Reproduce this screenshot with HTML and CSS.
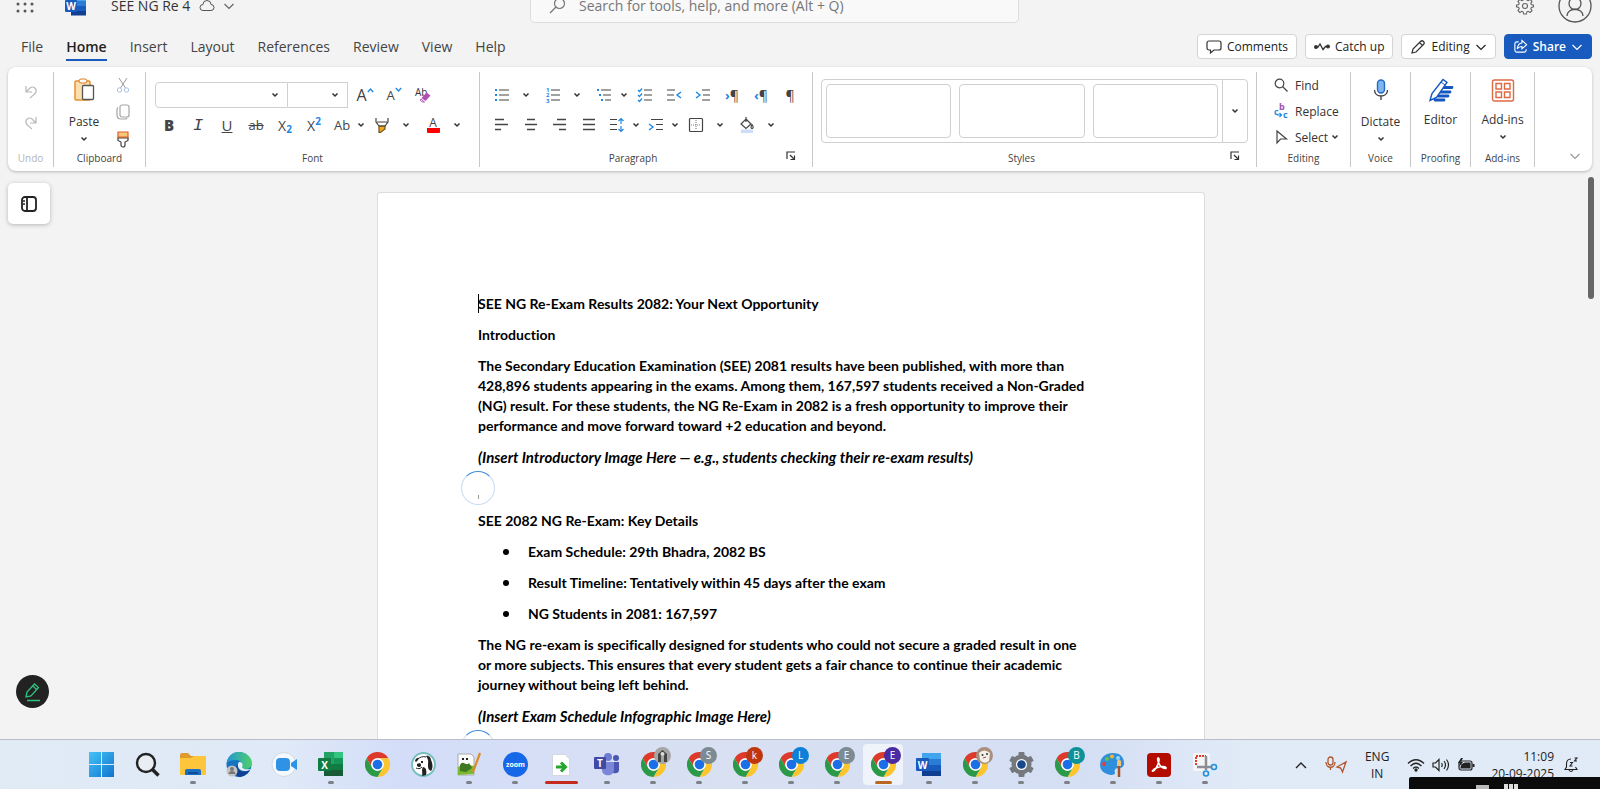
FILE: index.html
```html
<!DOCTYPE html>
<html lang="en">

<head>
    <meta charset="utf-8">
    <meta name="viewport" content="width=device-width, initial-scale=1">
    <title>SEE NG Re 4</title>
    <link rel="stylesheet" href="styles.css">
</head>

<body>

    <!-- shared icons -->
    <svg class="sprite" aria-hidden="true">
        <symbol id="chev" viewBox="0 0 8 8">
            <path d="M1.5 2.5L4 5l2.5-2.5" fill="none" stroke="#333" stroke-width="1.5" />
        </symbol>
        <symbol id="bigchev" viewBox="0 0 12 12">
            <path d="M1.5 4L6 8.500l4.500-4.500" fill="none" stroke="currentColor" stroke-width="1.200" />
        </symbol>
        <symbol id="launcher" viewBox="0 0 10 10">
            <path d="M1 8V1h8M4 4l4 4M8.500 4.500v4h-4" fill="none" stroke="#333" stroke-width="1.200" />
        </symbol>
        <symbol id="chrome" viewBox="0 0 24 24">
            <path fill="#dd3a2b" d="M12 6H22.400A12 12 0 0 0 1.600 6L6.800 15A6 6 0 0 1 12 6z" />
            <path fill="#fcc52d" d="M22.400 6H12A6 6 0 0 1 17.200 15L12 24A12 12 0 0 0 22.400 6z" />
            <path fill="#2a9a48" d="M1.600 6L6.800 15A6 6 0 0 0 17.200 15L12 24A12 12 0 0 1 1.600 6z" />
            <circle cx="12" cy="12" r="6" fill="#fff" />
            <circle cx="12" cy="12" r="4.600" fill="#1a6fe8" />
        </symbol>
    </svg>

    <header class="titlebar">
        <button class="waffle" aria-label="App launcher">
            <svg width="18" height="18" viewBox="0 0 18 18" fill="#555">
                <circle cx="2" cy="0" r="1.500" /><circle cx="9" cy="0" r="1.500" /><circle cx="16" cy="0" r="1.500" />
                <circle cx="2" cy="7" r="1.500" /><circle cx="9" cy="7" r="1.500" /><circle cx="16" cy="7" r="1.500" />
                <circle cx="2" cy="14" r="1.500" /><circle cx="9" cy="14" r="1.500" /><circle cx="16" cy="14" r="1.500" />
            </svg>
        </button>
        <svg class="wordlogo" width="22" height="20" viewBox="0 0 22 20">
            <path fill="#41a5ee" d="M6 0h15v5H6z" />
            <path fill="#2b7cd3" d="M6 5h15v5H6z" />
            <path fill="#185abd" d="M6 10h15v5H6z" />
            <path fill="#103f91" d="M6 15h15v4.500H6z" />
            <rect x="0" y="4" width="12" height="12" rx="1" fill="#185abd" />
            <text x="6" y="14" text-anchor="middle" class="logotext">W</text>
        </svg>
        <span class="docname">SEE NG Re 4</span>
        <svg class="cloud" width="16" height="12" viewBox="0 0 16 12" fill="none" stroke="#555">
            <path d="M4 10.500a3 3 0 0 1 0-6 4 4 0 0 1 8 0 3 3 0 0 1 0 6z" />
        </svg>
        <svg class="muted" width="12" height="12"><use href="#bigchev" /></svg>
        <label class="search">
            <svg width="17" height="17" viewBox="0 0 17 17" fill="none" stroke="#777" stroke-width="1.200">
                <circle cx="10.500" cy="6.500" r="5" /><path d="M7 10L1 16" />
            </svg>
            <input type="text" placeholder="Search for tools, help, and more (Alt + Q)" aria-label="Search">
        </label>
        <div class="account">
            <button aria-label="Settings">
                <svg width="18" height="18" viewBox="0 0 18 18" fill="none" stroke="#666" stroke-width="1.100">
                    <path d="M7.600 1h2.800l.5 2.200 1.200.5 2-1.200 1.900 1.900-1.200 2 .5 1.200 2.200.5v1.800l-2.200.5-.5 1.200 1.200 2-1.900 1.900-2-1.200-1.200.5-.5 2.200H7.600l-.5-2.200-1.200-.5-2 1.200L2 13.600l1.200-2-.5-1.200L.5 9.900V8.100l2.200-.5.5-1.200-1.200-2L3.900 2.500l2 1.200 1.200-.5z" />
                    <circle cx="9" cy="9" r="2.500" />
                </svg>
            </button>
            <button class="avatar" aria-label="Account">
                <svg width="34" height="34" viewBox="0 0 34 34" fill="none" stroke="#555" stroke-width="1.300">
                    <circle cx="17" cy="17" r="16" /><circle cx="17" cy="14.500" r="6" />
                    <path d="M9 27c0-9 16-9 16 0" />
                </svg>
            </button>
        </div>
    </header>

    <nav class="tabs">
        <a href="#">File</a>
        <a href="#" class="active">Home</a>
        <a href="#">Insert</a>
        <a href="#">Layout</a>
        <a href="#">References</a>
        <a href="#">Review</a>
        <a href="#">View</a>
        <a href="#">Help</a>
        <div class="actions">
            <button class="action">
                <svg width="16" height="16" viewBox="0 0 16 16" fill="none" stroke="#333" stroke-width="1.200">
                    <path d="M3 2h10a2 2 0 0 1 2 2v5a2 2 0 0 1-2 2H8l-3.500 3v-3H3a2 2 0 0 1-2-2V4a2 2 0 0 1 2-2z" />
                </svg>
                Comments
            </button>
            <button class="action">
                <svg width="16" height="16" viewBox="0 0 16 16" fill="none" stroke="#333" stroke-width="1.300">
                    <path d="M2 8h2l2-3 3 5.500L11.500 7.500H14" />
                    <circle cx="2" cy="8" r="1.300" fill="#333" /><circle cx="14" cy="7.500" r="1.300" fill="#333" />
                </svg>
                Catch up
            </button>
            <button class="action">
                <svg width="16" height="16" viewBox="0 0 16 16" fill="none" stroke="#333" stroke-width="1.200">
                    <path d="M2 14l1-4 7.500-7.500a2 2 0 0 1 3 3L6 13zM9.500 3.500l3 3" />
                </svg>
                Editing
                <svg width="12" height="12"><use href="#bigchev" /></svg>
            </button>
            <button class="action share">
                <svg width="15" height="15" viewBox="0 0 16 16" fill="none" stroke="#fff" stroke-width="1.200">
                    <path d="M6 3H4a2 2 0 0 0-2 2v7a2 2 0 0 0 2 2h8a2 2 0 0 0 2-2v-1M9.500 1.500L14.500 6l-5 4.500V8C7 8 5.500 9 4.500 10.500 5 6.500 7 4.500 9.500 4.300z" />
                </svg>
                Share
                <svg width="12" height="12"><use href="#bigchev" /></svg>
            </button>
        </div>
    </nav>

    <section class="ribbon">
        <div class="group undo">
            <div class="stack">
                <button aria-label="Undo" disabled>
                    <svg width="14" height="16" viewBox="0 0 14 16" fill="none" stroke="#b8b8b8" stroke-width="1.200">
                        <path d="M2 2v6h6M2 8l4-4c3-2.500 7 .5 6 4-.4 1.500-2 2.500-6 6" />
                    </svg>
                </button>
                <button aria-label="Redo" disabled>
                    <svg width="14" height="16" viewBox="0 0 14 16" fill="none" stroke="#b8b8b8" stroke-width="1.200">
                        <path d="M12 2v6H6M12 8L8 4C5 1.500 1 4.500 2 8c.4 1.500 2 2.500 6 6" />
                    </svg>
                </button>
            </div>
            <span class="label">Undo</span>
        </div>

        <div class="group clipboard">
            <div class="content">
                <button class="big">
                    <svg width="22" height="24" viewBox="0 0 22 24">
                        <rect x="2" y="3" width="15" height="19" rx="1" fill="#fbdfae" stroke="#e8912d" stroke-width="1.500" />
                        <rect x="6" y="1" width="8" height="4" rx="2" fill="#fff" stroke="#e07a1f" />
                        <rect x="9.500" y="7.500" width="11" height="14" rx="1" fill="#fff" stroke="#555" stroke-width="1.300" />
                    </svg>
                    <span>Paste</span>
                    <svg width="8" height="8"><use href="#chev" /></svg>
                </button>
                <div class="clips">
                    <button aria-label="Cut" disabled>
                        <svg width="14" height="16" viewBox="0 0 14 16" fill="none" stroke="#999">
                            <path d="M3 1l6.500 10M11 1L4.500 11" />
                            <circle cx="3.500" cy="13" r="2.200" stroke="#a8c4ea" /><circle cx="10.500" cy="13" r="2.200" stroke="#a8c4ea" />
                        </svg>
                    </button>
                    <button aria-label="Copy" disabled>
                        <svg width="14" height="16" viewBox="0 0 14 16" fill="none" stroke="#a5a5a5" stroke-width="1.200">
                            <rect x="4" y="1" width="9" height="12" rx="2" /><path d="M2 3.500C1 4 1 5 1 6v5c0 3 1 4 4 4h4c1 0 2 0 2-1" />
                        </svg>
                    </button>
                    <button aria-label="Format painter">
                        <svg width="14" height="16" viewBox="0 0 14 16">
                            <path d="M2 1h10v6H2z" fill="#f8c77a" stroke="#d9622b" stroke-width="1.200" />
                            <path d="M2 7h10v2.500L9 11v3a2 2 0 0 1-4 0v-3L2 9.500z" fill="#fff" stroke="#444" stroke-width="1.200" />
                            <path d="M2 6h10" stroke="#d9622b" />
                        </svg>
                    </button>
                </div>
            </div>
            <span class="label">Clipboard</span>
        </div>

        <div class="group font">
            <div class="rows">
                <div class="row">
                    <button class="combo name" aria-label="Font name"><svg width="8" height="8"><use href="#chev" /></svg></button>
                    <button class="combo size" aria-label="Font size"><svg width="8" height="8"><use href="#chev" /></svg></button>
                    <button class="tool grow" aria-label="Grow font">
                        <span class="la">A</span><svg width="7" height="16" viewBox="0 0 7 16"><path d="M.8 5l2.700-3 2.700 3" fill="none" stroke="#1e88e5" stroke-width="1.300" /></svg>
                    </button>
                    <button class="tool" aria-label="Shrink font">
                        <span class="sa">A</span><svg width="7" height="16" viewBox="0 0 7 16"><path d="M.8 1l2.700 3 2.700-3" fill="none" stroke="#1e88e5" stroke-width="1.300" /></svg>
                    </button>
                    <button class="tool clear" aria-label="Clear formatting">
                        <svg width="18" height="18" viewBox="0 0 18 18">
                            <text x="1" y="10" class="abtext">Ab</text>
                            <path d="M12.500 6.500l4 3-5 5.500-4-3z" fill="#b14fb5" /><path d="M7 13l3.500 3H8.500L6.500 14.500z" fill="#fff" stroke="#b14fb5" />
                        </svg>
                    </button>
                </div>
                <div class="row">
                    <button class="tool b">B</button>
                    <button class="tool i">I</button>
                    <button class="tool u">U</button>
                    <button class="tool s">ab</button>
                    <button class="tool x">X<span class="low">2</span></button>
                    <button class="tool x">X<span class="high">2</span></button>
                    <button class="tool tight case">Ab</button>
                    <button class="drop tight" aria-label="Change case options"><svg width="8" height="8"><use href="#chev" /></svg></button>
                    <button class="tool" aria-label="Highlight">
                        <svg width="16" height="18" viewBox="0 0 16 18" fill="none" stroke="#444" stroke-width="1.200">
                            <path d="M5 10h6v3l-4.500 3.500H5z" fill="#f5a623" stroke="#6b5322" /><path d="M2 2v4l3 4h6l3-4V2M3 6h10" />
                        </svg>
                    </button>
                    <button class="drop" aria-label="Highlight colors"><svg width="8" height="8"><use href="#chev" /></svg></button>
                    <button class="tool color" aria-label="Font color"><span>A</span></button>
                    <button class="drop" aria-label="Font colors"><svg width="8" height="8"><use href="#chev" /></svg></button>
                </div>
            </div>
            <span class="label">Font</span>
        </div>

        <div class="group paragraph">
            <div class="rows">
                <div class="row">
                    <button class="tool" aria-label="Bullets">
                        <svg width="16" height="16" viewBox="0 0 16 16">
                            <path d="M5 3h10M5 8h10M5 13h10" stroke="#444" stroke-width="1.200" />
                            <path d="M1 2h2v2H1zM1 7h2v2H1zM1 12h2v2H1z" fill="#1e88e5" />
                        </svg>
                    </button>
                    <button class="drop" aria-label="Bullet library"><svg width="8" height="8"><use href="#chev" /></svg></button>
                    <button class="tool" aria-label="Numbering">
                        <svg width="16" height="16" viewBox="0 0 16 16">
                            <path d="M6 3h9M6 8h9M6 13h9" stroke="#444" stroke-width="1.200" />
                            <text x="1" y="5" class="num">1</text><text x="1" y="10" class="num">2</text><text x="1" y="16" class="num">3</text>
                        </svg>
                    </button>
                    <button class="drop" aria-label="Numbering library"><svg width="8" height="8"><use href="#chev" /></svg></button>
                    <button class="tool" aria-label="Multilevel list">
                        <svg width="16" height="16" viewBox="0 0 16 16">
                            <path d="M5 3h10M7 8h8M9 13h6" stroke="#444" stroke-width="1.200" />
                            <path d="M1 2h2v2H1zM3 7h2v2H3zM5 12h2v2H5z" fill="#1e88e5" />
                        </svg>
                    </button>
                    <button class="drop tight" aria-label="List options"><svg width="8" height="8"><use href="#chev" /></svg></button>
                    <button class="tool" aria-label="Checklist">
                        <svg width="16" height="16" viewBox="0 0 16 16" fill="none" stroke="#444" stroke-width="1.200">
                            <path d="M7 3h8M7 8h8M7 13h8" />
                            <path d="M1 3l1.500 1.500L5 1.500M1 8l1.500 1.500L5 6.500M1 13l1.500 1.500L5 11.500" stroke="#1e88e5" />
                        </svg>
                    </button>
                    <button class="tool" aria-label="Decrease indent">
                        <svg width="16" height="16" viewBox="0 0 16 16" fill="none" stroke="#444" stroke-width="1.200">
                            <path d="M1 3h8M1 8h7M1 13h8" /><path d="M15 5l-4 3 4 3" stroke="#1e88e5" stroke-width="1.400" />
                        </svg>
                    </button>
                    <button class="tool" aria-label="Increase indent">
                        <svg width="16" height="16" viewBox="0 0 16 16" fill="none" stroke="#444" stroke-width="1.200">
                            <path d="M7 3h8M8 8h7M7 13h8" /><path d="M1 5l4 3-4 3" stroke="#1e88e5" stroke-width="1.400" />
                        </svg>
                    </button>
                    <button class="tool pil" aria-label="Left to right"><b>›</b>¶</button>
                    <button class="tool pil" aria-label="Right to left"><b>‹</b>¶</button>
                    <button class="tool pil" aria-label="Show marks">¶</button>
                </div>
                <div class="row">
                    <button class="tool" aria-label="Align left">
                        <svg width="16" height="16" viewBox="0 0 16 16" stroke="#444" stroke-width="1.300"><path d="M1 2.500h9M1 7.500h13M1 12.500h6" /></svg>
                    </button>
                    <button class="tool" aria-label="Center">
                        <svg width="16" height="16" viewBox="0 0 16 16" stroke="#444" stroke-width="1.300"><path d="M4 2.500h8M2 7.500h12M4 12.500h8" /></svg>
                    </button>
                    <button class="tool" aria-label="Align right">
                        <svg width="16" height="16" viewBox="0 0 16 16" stroke="#444" stroke-width="1.300"><path d="M5 2.500h9M1 7.500h13M7 12.500h7" /></svg>
                    </button>
                    <button class="tool" aria-label="Justify">
                        <svg width="16" height="16" viewBox="0 0 16 16" stroke="#444" stroke-width="1.300"><path d="M2 2.500h12M2 7.500h12M2 12.500h12" /></svg>
                    </button>
                    <button class="tool tight" aria-label="Line spacing">
                        <svg width="16" height="16" viewBox="0 0 16 16" fill="none" stroke="#444" stroke-width="1.200">
                            <path d="M1 2.500h7M1 7.500h7M1 12.500h7" /><path d="M12 2v5M9.500 4L12 1.500 14.500 4M12 9v5M9.500 12l2.500 2.500 2.500-2.500" stroke="#1e88e5" />
                        </svg>
                    </button>
                    <button class="drop tight" aria-label="Line spacing options"><svg width="8" height="8"><use href="#chev" /></svg></button>
                    <button class="tool tight" aria-label="Special indent">
                        <svg width="16" height="16" viewBox="0 0 16 16" fill="none" stroke="#444" stroke-width="1.200">
                            <path d="M3 2.500h12M8 7.500h7M8 12.500h7" /><path d="M1 7l4 3-4 3" stroke="#1e88e5" stroke-width="1.400" />
                        </svg>
                    </button>
                    <button class="drop tight" aria-label="Indent options"><svg width="8" height="8"><use href="#chev" /></svg></button>
                    <button class="tool" aria-label="Borders">
                        <svg width="16" height="16" viewBox="0 0 16 16" fill="none" stroke="#444" stroke-width="1.200">
                            <rect x="1.500" y="1.500" width="13" height="13" rx="1" /><path d="M8 3v10M3 8h10" stroke="#888" stroke-dasharray="1 1" />
                        </svg>
                    </button>
                    <button class="drop" aria-label="Border options"><svg width="8" height="8"><use href="#chev" /></svg></button>
                    <button class="tool" aria-label="Shading">
                        <svg width="16" height="18" viewBox="0 0 16 18" fill="none" stroke="#444" stroke-width="1.200">
                            <path d="M2 13.500h12v3.500H2z" fill="#cfdcf5" stroke="none" /><path d="M7 3l5 5-5 4.500L2 8zM7 1v5" /><path d="M13 8.500c2 2.500 1 4 0 4s-1.500-1.500 0-4z" />
                        </svg>
                    </button>
                    <button class="drop" aria-label="Shading colors"><svg width="8" height="8"><use href="#chev" /></svg></button>
                </div>
            </div>
            <span class="label">Paragraph</span>
            <button class="launcher" aria-label="Paragraph settings"><svg width="10" height="10"><use href="#launcher" /></svg></button>
        </div>

        <div class="group styles">
            <div class="gallery">
                <div class="cards">
                    <button aria-label="Style 1"></button>
                    <button aria-label="Style 2"></button>
                    <button aria-label="Style 3"></button>
                </div>
                <button class="more" aria-label="More styles"><svg width="8" height="8"><use href="#chev" /></svg></button>
            </div>
            <span class="label">Styles</span>
            <button class="launcher" aria-label="Styles pane"><svg width="10" height="10"><use href="#launcher" /></svg></button>
        </div>

        <div class="group editing">
            <div class="list">
                <button>
                    <svg width="14" height="14" viewBox="0 0 14 14" fill="none" stroke="#444" stroke-width="1.200"><circle cx="5.500" cy="5.500" r="4.300" /><path d="M8.500 8.500l5 5" /></svg>
                    Find
                </button>
                <button>
                    <svg width="14" height="16" viewBox="0 0 14 16" fill="none">
                        <text x="5" y="7" class="rb">b</text><text x="0" y="12" class="rc">c</text><text x="9" y="15" class="rc">c</text>
                        <path d="M3 12h4M5.500 10l2 2-2 2" stroke="#1e88e5" stroke-width="1.200" />
                    </svg>
                    Replace
                </button>
                <button>
                    <svg width="14" height="14" viewBox="0 0 14 14" fill="none" stroke="#444" stroke-width="1.200"><path d="M3 1l9.500 8H6.500L3 13z" /></svg>
                    Select
                    <svg class="after" width="8" height="8"><use href="#chev" /></svg>
                </button>
            </div>
            <span class="label">Editing</span>
        </div>

        <div class="group voice">
            <button class="big">
                <svg width="16" height="24" viewBox="0 0 16 24" fill="none" stroke="#444" stroke-width="1.400">
                    <rect x="4.500" y="2" width="7" height="13" rx="3.500" fill="#7db7ee" stroke="#2468c8" />
                    <path d="M1.500 12c0 8 13 8 13 0M8 18v4" />
                </svg>
                <span>Dictate</span>
                <svg width="8" height="8"><use href="#chev" /></svg>
            </button>
            <span class="label">Voice</span>
        </div>

        <div class="group proofing">
            <button class="big">
                <svg width="26" height="24" viewBox="0 0 26 24">
                    <path d="M14 9.500h10M12 14h10M10 18h10M7 22h9" stroke="#1557c0" stroke-width="2.800" stroke-linecap="round" />
                    <path d="M2 22.500l2-7L15 1.500l4 3L8.500 19.500z" fill="#fff" stroke="#1557c0" stroke-width="1.400" />
                    <path d="M13 4l4 3" stroke="#1557c0" />
                </svg>
                <span>Editor</span>
            </button>
            <span class="label">Proofing</span>
        </div>

        <div class="group addins">
            <button class="big">
                <svg width="24" height="24" viewBox="0 0 24 24" fill="none" stroke="#dd6a43" stroke-width="1.400">
                    <rect x="1.500" y="2" width="21" height="21" rx="2" />
                    <path d="M5 5.500h5.500V11H5zM13.500 5.500H19V11h-5.500zM5 14h5.500v5.500H5zM13.500 14H19v5.500h-5.500z" />
                </svg>
                <span>Add-ins</span>
                <svg width="8" height="8"><use href="#chev" /></svg>
            </button>
            <span class="label">Add-ins</span>
        </div>

        <button class="collapse" aria-label="Collapse ribbon"><svg width="12" height="12"><use href="#bigchev" /></svg></button>
    </section>

    <main class="workspace">
        <button class="navpane" aria-label="Navigation pane">
            <svg width="16" height="16" viewBox="0 0 16 16" fill="none" stroke="#222" stroke-width="1.800">
                <rect x="1" y="1" width="14" height="14" rx="3" /><path d="M6 1v14" /><path d="M2 5h2M2 8h2" stroke-width="1.400" />
            </svg>
        </button>
        <article class="page">
            <span class="caret"></span>
            <p>SEE NG Re-Exam Results 2082: Your Next Opportunity</p>
            <p>Introduction</p>
            <p>The Secondary Education Examination (SEE) 2081 results have been published, with more than
                428,896 students appearing in the exams. Among them, 167,597 students received a Non-Graded
                (NG) result. For these students, the NG Re-Exam in 2082 is a fresh opportunity to improve their
                performance and move forward toward +2 education and beyond.</p>
            <p><em>(Insert Introductory Image Here — e.g., students checking their re-exam results)</em></p>
            <div class="spinner"></div>
            <p>SEE 2082 NG Re-Exam: Key Details</p>
            <ul>
                <li>Exam Schedule: 29th Bhadra, 2082 BS</li>
                <li>Result Timeline: Tentatively within 45 days after the exam</li>
                <li>NG Students in 2081: 167,597</li>
            </ul>
            <p>The NG re-exam is specifically designed for students who could not secure a graded result in one
                or more subjects. This ensures that every student gets a fair chance to continue their academic
                journey without being left behind.</p>
            <p><em>(Insert Exam Schedule Infographic Image Here)</em></p>
            <div class="spinner"></div>
        </article>
        <div class="scrollbar"><div class="thumb"></div></div>
        <button class="pen" aria-label="Annotate">
            <svg width="20" height="20" viewBox="0 0 20 20" fill="none" stroke="#2fc27d" stroke-width="1.300">
                <path d="M3 15l1-5 7.500-8 4 3.500L8 14zM10 4l3.500 3.500M4 18.500h13" />
            </svg>
        </button>
    </main>

    <footer class="taskbar">
        <div class="apps">
            <button aria-label="Start">
                <svg width="25" height="25" viewBox="0 0 25 25">
                    <defs><linearGradient id="win" x1="0" y1="0" x2="1" y2="1"><stop offset="0" stop-color="#46c3f7" /><stop offset="1" stop-color="#0f74cf" /></linearGradient></defs>
                    <path fill="url(#win)" d="M0 0h12v12H0zM13 0h12v12H13zM0 13h12v12H0zM13 13h12v12H13z" />
                </svg>
            </button>
            <button aria-label="Search">
                <svg width="25" height="25" viewBox="0 0 25 25" fill="#e9eef5" stroke="#222" stroke-width="2.400"><circle cx="11" cy="11" r="9" /><path d="M17 17l6.500 6.500" stroke-width="3.500" /></svg>
            </button>
            <button class="open" aria-label="File Explorer">
                <svg width="26" height="25" viewBox="0 0 26 25">
                    <path fill="#e09a2b" d="M0 3q0-2 2-2h6l3 3h9v6H0z" /><path fill="#fcc53b" d="M0 7q0-1 1-1h10l3-2h11q1 0 1 1v17q0 1-1 1H1q-1 0-1-1z" />
                    <path fill="#1a6fc4" d="M5 23v-4q0-2 2-2h12q2 0 2 2v4z" /><path fill="#0d4f96" d="M8 20h10v2H8z" />
                </svg>
            </button>
            <button aria-label="Edge">
                <svg width="26" height="25" viewBox="0 0 26 25">
                    <defs><linearGradient id="edge"><stop offset="0" stop-color="#2396d8" /><stop offset="1" stop-color="#4fd168" /></linearGradient></defs>
                    <circle cx="13" cy="12.500" r="12.500" fill="#1673c2" />
                    <path fill="url(#edge)" d="M.6 11C3 2 8 0 13 0c8 0 13 6 13 11 0 4-3 6-7 6-3 0-4-1-3-3 1-3-2-6-6-6C6 8 2 9 .6 11z" />
                    <path fill="#e6eef8" d="M13 10c-3 4 0 9 6 9 2 0 4 0 6-2-3 0-6 1-8.500-1-1-1 .5-2 0-4-.5-1.500-2-2-3.500-2z" />
                    <path fill="#123f8f" d="M12 12c-2 6 4 10 12 6-3 5-8 7-11 7-5-2-5-9-1-13z" />
                    <circle cx="6" cy="19" r="5.500" fill="#c4c4c4" /><circle cx="6" cy="17" r="2" fill="#777" /><path fill="#777" d="M2.500 22c0-4 7-4 7 0z" />
                </svg>
            </button>
            <button aria-label="Meet now">
                <svg width="26" height="25" viewBox="0 0 26 25">
                    <circle cx="12" cy="12.500" r="12" fill="#f5f8fc" stroke="#d1d9e5" /><rect x="4" y="6" width="14" height="13" rx="4" fill="#2e93e4" /><path fill="#2e93e4" d="M19 11l6-4v11l-6-4z" />
                </svg>
            </button>
            <button class="open" aria-label="Excel">
                <svg width="26" height="25" viewBox="0 0 26 25">
                    <path fill="#21a366" d="M6 0h10v12H6z" /><path fill="#33c481" d="M16 0h9v6h-9z" /><path fill="#159558" d="M16 6h9v6h-9z" /><path fill="#107c41" d="M6 12h19v6H6z" /><path fill="#185c37" d="M6 18h19v6H6z" />
                    <rect y="6" width="13" height="13" rx="1" fill="#107c41" /><text x="6.500" y="16.500" text-anchor="middle" class="logotext">X</text>
                </svg>
            </button>
            <button aria-label="Chrome"><svg width="25" height="25"><use href="#chrome" /></svg></button>
            <button aria-label="DBeaver">
                <svg width="25" height="25" viewBox="0 0 25 25">
                    <circle cx="12.500" cy="12.500" r="11.500" fill="#fff" stroke="#74bdbd" stroke-width="1.800" />
                    <path fill="#222" d="M4 9c0-2 3-4 4-3-1 1-1 3-3 4zM15 4c3-1 5 2 5 4 2 4 2 8 0 11-2-1-3-2-3-5 0-4 1-6-2-10z" />
                    <path fill="#222" d="M6 12c2-1 4-1 4 1s-2 3-4 1zM10 9h2v2h-2zM12 15c3 0 4 4 3 8l-4 1c1-3-1-5 1-9z" />
                    <path fill="none" stroke="#222" d="M5 16c2 1 4 1 6-1M7 7c2-2 5-3 8-2" />
                </svg>
            </button>
            <button class="open" aria-label="Notepad++">
                <svg width="26" height="25" viewBox="0 0 26 25">
                    <path fill="#fafafa" stroke="#aaa" d="M2 2h13l3 3v18H2z" /><path fill="#79b82f" d="M2 15l6-3 10 2v8l-16 1z" /><path fill="#3f7723" d="M4 13c3-6 6 2 9-2l3 5-6 4-6-1z" /><path fill="#222" d="M6 6h2v2H6zM10 6h2v2h-2z" />
                    <path stroke="#e08a28" stroke-width="2.200" d="M24 1L17 20" />
                </svg>
            </button>
            <button class="open" aria-label="Zoom">
                <svg width="25" height="25" viewBox="0 0 25 25"><circle cx="12.500" cy="12.500" r="12.500" fill="#1668e8" /><text x="12.500" y="15" text-anchor="middle" class="zoomtext">zoom</text></svg>
            </button>
            <button class="open alert" aria-label="Export">
                <svg width="18" height="22" viewBox="0 0 18 22"><path fill="#fff" stroke="#d5d9df" d="M.5.500H13l4.500 4.500v16.500H.5z" /><path fill="none" stroke="#26a52f" stroke-width="3" d="M4 13h9M9 8.500l4.500 4.500L9 17.500" /></svg>
            </button>
            <button class="open" aria-label="Teams">
                <svg width="26" height="23" viewBox="0 0 26 23">
                    <circle cx="14" cy="4" r="4" fill="#6f7bd0" /><circle cx="22" cy="5" r="3" fill="#4a56b0" /><path fill="#4a56b0" d="M17 9h8v8c0 4-5 4-8 2z" /><path fill="#7b86d8" d="M8 9h12v8c0 7-12 7-12 0z" />
                    <rect y="4" width="12" height="12" rx="1" fill="#4049a4" /><text x="6" y="14" text-anchor="middle" class="logotext">T</text>
                </svg>
            </button>
            <button class="open" aria-label="Chrome profile"><svg width="25" height="25"><use href="#chrome" /></svg>
                <span class="badge photo"><svg width="17" height="17" viewBox="0 0 17 17"><circle cx="8.500" cy="8.500" r="8.500" fill="#a5a5a5" /><path fill="#444" d="M4 15V7l4.500-4L13 7v8h-3V9H7v6z" /><circle cx="8.500" cy="7" r="2" fill="#ddd" /></svg></span></button>
            <button class="open" aria-label="Chrome profile S"><svg width="25" height="25"><use href="#chrome" /></svg><span class="badge grey">S</span></button>
            <button class="open" aria-label="Chrome profile k"><svg width="25" height="25"><use href="#chrome" /></svg><span class="badge red">k</span></button>
            <button class="open" aria-label="Chrome profile L"><svg width="25" height="25"><use href="#chrome" /></svg><span class="badge blue">L</span></button>
            <button class="open" aria-label="Chrome profile E"><svg width="25" height="25"><use href="#chrome" /></svg><span class="badge grey">E</span></button>
            <button class="open current" aria-label="Chrome current profile"><svg width="25" height="25"><use href="#chrome" /></svg><span class="badge purple">E</span></button>
            <button class="open" aria-label="Word">
                <svg width="26" height="25" viewBox="0 0 26 25">
                    <path fill="#41a5ee" d="M6 1h19v6H6z" /><path fill="#2b7cd3" d="M6 7h19v6H6z" /><path fill="#185abd" d="M6 13h19v6H6z" /><path fill="#103f91" d="M6 19h19v5H6z" />
                    <rect y="6" width="13" height="13" rx="1" fill="#185abd" /><text x="6.500" y="16.500" text-anchor="middle" class="logotext">W</text>
                </svg>
            </button>
            <button class="open" aria-label="Chrome profile photo"><svg width="25" height="25"><use href="#chrome" /></svg>
                <span class="badge photo"><svg width="17" height="17" viewBox="0 0 17 17"><circle cx="8.500" cy="8.500" r="8.500" fill="#a98f7c" /><path fill="#f3efe9" d="M3 6q5-5 11 0l-1 8q-5 4-9-1z" /><circle cx="6.500" cy="8" r="1" fill="#333" /><circle cx="11" cy="7" r="1" fill="#333" /><path d="M7 11l3-1" stroke="#a44" /></svg></span></button>
            <button class="open" aria-label="Settings">
                <svg width="25" height="25" viewBox="0 0 25 25">
                    <g fill="#75797e"><rect x="9.500" y="0" width="6" height="25" rx="1" /><rect x="9.500" y="0" width="6" height="25" rx="1" transform="rotate(60 12.500 12.500)" /><rect x="9.500" y="0" width="6" height="25" rx="1" transform="rotate(120 12.500 12.500)" /><circle cx="12.500" cy="12.500" r="10" /></g>
                    <circle cx="12.500" cy="12.500" r="5.500" fill="#fff" /><circle cx="12.500" cy="12.500" r="4.300" fill="#18488c" />
                </svg>
            </button>
            <button class="open" aria-label="Chrome profile B"><svg width="25" height="25"><use href="#chrome" /></svg><span class="badge teal">B</span></button>
            <button class="open" aria-label="Paint">
                <svg width="26" height="25" viewBox="0 0 26 25">
                    <path fill="#2f8fdc" d="M13 1c8 0 11 5 11 10 0 4-2 5-5 5-4 0-5 2-4 5 0 4-15 2-15-8C0 6 5 1 13 1z" />
                    <circle cx="4" cy="12" r="2" fill="#e33f36" /><circle cx="7" cy="7" r="2" fill="#68c143" /><circle cx="12" cy="4.500" r="2" fill="#f7b52c" /><circle cx="18" cy="6" r="2" fill="#8ed8f7" />
                    <path stroke="#a5542a" stroke-width="2.500" d="M19 14v11" /><path fill="#eec27a" d="M17 9q2-3 4 0v5h-4z" />
                </svg>
            </button>
            <button class="open" aria-label="Acrobat">
                <svg width="24" height="24" viewBox="0 0 24 24"><rect width="24" height="24" rx="4" fill="#b30b00" /><path fill="none" stroke="#fff" stroke-width="1.600" d="M5.500 18c2 1 7-8 6.500-12-.5-2-2-1-1 2 1 4 4 7 7 7.500 2 0 1-2-2-2-4 0-9 2-10.500 4.500z" /></svg>
            </button>
            <button class="open" aria-label="Snipping Tool">
                <svg width="26" height="26" viewBox="0 0 26 26" fill="none"><rect x="1" y="1" width="17" height="18" rx="2" fill="#f4f5f7" /><path stroke="#e23b2e" stroke-width="2" stroke-dasharray="2 1" d="M4 13V4h10" /><path stroke="#8b8f94" stroke-width="2.500" d="M14 4v14M5 15h14" /><circle cx="14" cy="21.500" r="2.500" stroke="#2590dc" stroke-width="1.600" /><circle cx="22" cy="15" r="2.500" stroke="#2590dc" stroke-width="1.600" /></svg>
            </button>
        </div>
        <div class="tray">
            <button aria-label="Hidden icons"><svg width="12" height="12" viewBox="0 0 12 12"><path d="M1 9l5-5 5 5" fill="none" stroke="#222" stroke-width="1.400" /></svg></button>
            <svg class="mic" width="22" height="18" viewBox="0 0 22 18" fill="none" stroke="#b0562a" stroke-width="1.300">
                <rect x="3" y="1" width="5" height="8" rx="2.500" /><path d="M1 6c0 7 9 7 9 0M5.500 11v3M12 11l9-5-3.500 10-1.800-4z" />
            </svg>
            <span class="lang">ENG<br>IN</span>
            <div class="status">
                <svg width="18" height="14" viewBox="0 0 18 14" fill="none" stroke="#222" stroke-width="1.300">
                    <path d="M1 5.500c5-5 11-5 16 0M3.500 8c3.500-3.500 7.500-3.500 11 0M6 10.500c2-2 4-2 6 0" /><circle cx="9" cy="12" r="1" fill="#222" />
                </svg>
                <svg width="18" height="14" viewBox="0 0 18 14" fill="none" stroke="#222" stroke-width="1.200">
                    <path d="M1 5h2.500L7 1.500v11L3.500 9H1zM9.500 5q1.500 2 0 4M12 3q3 4 0 8M14.500 1.500q4 5.500 0 11" />
                </svg>
                <svg width="18" height="14" viewBox="0 0 18 14" fill="none" stroke="#222" stroke-width="1.200">
                    <rect x="2" y="3" width="13" height="9" rx="2" /><path d="M5 6.500L8 5h5v5H4z" fill="#222" /><path d="M16.500 6v3" stroke-width="2" /><path fill="#222" stroke="none" d="M4 0L1 5h2L2 9l4-5H4l2-4z" />
                </svg>
            </div>
            <time class="clock">11:09<br>20-09-2025</time>
            <svg class="bell" width="16" height="16" viewBox="0 0 16 16" fill="none" stroke="#222" stroke-width="1.100">
                <path d="M8 2C5 2 3.500 4 3.500 7v3L2 12.500h12L12.500 10M6 13q2 3 4 0" /><path d="M7 5.500h2.500L7 9h2.500M11.500 1H14l-2.500 3H14" />
            </svg>
        </div>
        <div class="overlay"><span class="mini"></span><span class="dots"></span></div>
    </footer>

</body>

</html>
```
FILE: styles.css
```css
* {
    box-sizing: border-box;
}

body {
    margin: 0;
    height: 100vh;
    display: flex;
    flex-direction: column;
    overflow: hidden;
    background: #f3f3f3;
    color: #333;
    font-family: "Open Sans", "Noto Sans", sans-serif;
    font-size: 12px;
}

button {
    font: inherit;
    color: inherit;
    background: none;
    border: none;
    padding: 0;
    margin: 0;
}

svg {
    display: block;
    flex: none;
    overflow: visible;
}

.sprite {
    position: absolute;
    width: 0;
    height: 0;
}

.logotext {
    font: bold 10px "Open Sans", sans-serif;
    fill: #fff;
}

.zoomtext {
    font: bold 7px "Open Sans", sans-serif;
    fill: #fff;
}

/* title bar */
.titlebar {
    position: relative;
    display: flex;
    align-items: center;
    flex: none;
    height: 48px;
    margin-top: -18px;
    padding: 0 8px 0 16px;
}

.waffle {
    margin-right: 31px;
}

.wordlogo {
    margin-right: 24px;
}

.docname {
    font-size: 14px;
    line-height: 16px;
    margin-right: 9px;
}

.cloud {
    margin-right: 8px;
}

.muted {
    color: #666;
}

.search {
    position: absolute;
    left: 530px;
    right: 581px;
    top: 0;
    height: 41px;
    display: flex;
    align-items: center;
    padding: 6px 16px 0 18px;
    background: #f9f9f9;
    border: 1px solid #ddd;
    border-radius: 5px;
}

.search input {
    flex: 1;
    margin-left: 13px;
    border: none;
    padding: 0;
    outline: none;
    background: none;
    font: inherit;
    font-size: 14px;
}

.search input::placeholder {
    color: #777;
}

.account {
    display: flex;
    align-items: center;
    gap: 24px;
    margin-left: auto;
}

/* tabs */
.tabs {
    display: flex;
    flex: none;
    height: 37px;
    padding: 2px 8px 0 21px;
    gap: 23px;
}

.tabs a {
    height: 29px;
    line-height: 29px;
    color: #444;
    font-size: 14px;
    text-decoration: none;
}

.tabs a.active {
    color: #222;
    font-weight: 600;
    border-bottom: 2px solid #185abd;
}

.actions {
    display: flex;
    gap: 8px;
    margin: 2px 0 0 auto;
}

.action {
    display: flex;
    align-items: center;
    gap: 5px;
    height: 25px;
    padding: 0 8px;
    font-size: 12px;
    color: #222;
    background: #fff;
    border: 1px solid #d4d4d4;
    border-radius: 4px;
}

.share {
    color: #fff;
    font-weight: 600;
    background: #185abd;
    border-color: #185abd;
}

/* ribbon */
.ribbon {
    display: flex;
    flex: none;
    height: 104px;
    margin: 0 8px;
    padding: 5px 0 4px;
    background: #fff;
    border-radius: 8px;
    box-shadow: 0 1px 3px rgba(0, 0, 0, 0.25);
}

.group {
    position: relative;
    display: flex;
    flex-direction: column;
    flex: none;
    border-right: 1px solid #c8c8c8;
}

.label {
    margin-top: auto;
    height: 17px;
    line-height: 17px;
    font-size: 10px;
    text-align: center;
    color: #444;
}

.undo {
    width: 46px;
}

.undo .label {
    color: #b5b5b5;
}

.stack {
    display: flex;
    flex-direction: column;
    align-items: center;
    gap: 15px;
    padding-top: 12px;
}

.clipboard {
    width: 92px;
}

.content {
    display: flex;
    justify-content: center;
    gap: 17px;
}

.big {
    display: flex;
    flex-direction: column;
    align-items: center;
    padding-top: 6px;
}

.big span {
    line-height: 18px;
    margin: 11px 0 4px;
}

.proofing .big span,
.addins .big span {
    margin-top: 9px;
}

.clips {
    display: flex;
    flex-direction: column;
    gap: 11px;
    padding-top: 5px;
}

.font {
    width: 334px;
}

.paragraph {
    width: 333px;
}

.rows {
    padding: 8px 0 0 8px;
}

.font .rows {
    padding-left: 9px;
}

.row {
    display: flex;
    align-items: center;
    height: 30px;
}

.combo {
    display: flex;
    align-items: center;
    justify-content: flex-end;
    height: 26px;
    padding-right: 8px;
    border: 1px solid #d0d0d0;
}

.combo.name {
    width: 133px;
    border-radius: 4px 0 0 4px;
}

.combo.size {
    width: 60px;
    border-left: none;
    margin-right: 3px;
}

.tool {
    display: flex;
    align-items: center;
    justify-content: center;
    width: 28px;
    height: 26px;
    margin-right: 1px;
    font-size: 15px;
    color: #444;
}

.tool.tight {
    width: 26px;
    margin-right: 0;
}

.tool:has(+ .drop) {
    margin-right: 0;
}

.drop {
    display: flex;
    align-items: center;
    justify-content: center;
    width: 20px;
    height: 26px;
    margin-right: 3px;
}

.drop.tight {
    width: 12px;
    margin-right: 1px;
}

.la {
    font-size: 16px;
}

.sa {
    font-size: 13px;
}

.abtext {
    font: 10px "Open Sans", sans-serif;
    fill: #333;
}

.b {
    font-weight: 800;
}

.i {
    font-family: "Liberation Mono", monospace;
    font-style: italic;
    font-size: 17px;
}

.u {
    text-decoration: underline;
}

.s {
    font-size: 13px;
    text-decoration: line-through;
}

.x {
    font-size: 14px;
}

.low,
.high {
    color: #1e88e5;
    font-size: 10px;
    font-weight: bold;
}

.low {
    padding-top: 8px;
}

.high {
    padding-bottom: 8px;
}

.case {
    font-size: 13px;
}

.color span {
    width: 13px;
    height: 16px;
    line-height: 11px;
    font-size: 12px;
    border-bottom: 5px solid #f00;
    border-radius: 1px;
}

.num {
    font: bold 6px "Open Sans", sans-serif;
    fill: #1e88e5;
}

.pil {
    font-size: 14px;
}

.pil b {
    color: #1e88e5;
    font-size: 13px;
}

.launcher {
    position: absolute;
    right: 16px;
    bottom: 6px;
}

.paragraph .label,
.styles .label {
    padding-right: 26px;
}

.styles {
    flex: 1;
}

.gallery {
    display: flex;
    height: 64px;
    margin: 7px 8px 0;
    border: 1px solid #d0d0d0;
    border-radius: 4px;
}

.cards {
    display: flex;
    flex: 1;
    gap: 8px;
    padding: 4px;
}

.cards button {
    flex: 1;
    border: 1px solid #d0d0d0;
    border-radius: 4px;
}

.more {
    display: flex;
    align-items: center;
    justify-content: center;
    width: 25px;
    border-left: 1px solid #d0d0d0;
}

.editing {
    width: 94px;
}

.list {
    display: flex;
    flex-direction: column;
    padding-left: 17px;
}

.list button {
    display: flex;
    align-items: center;
    gap: 7px;
    height: 26px;
}

.list .after {
    margin-left: -4px;
}

.rb,
.rc {
    font: bold 9px "Open Sans", sans-serif;
    fill: #1e88e5;
}

.rb {
    fill: #9b4fb0;
}

.voice,
.proofing {
    width: 60px;
}

.addins {
    width: 64px;
}

.collapse {
    flex: none;
    width: 57px;
    align-self: flex-end;
    padding: 0 0 5px 34px;
    color: #999;
}

/* document */
.workspace {
    position: relative;
    display: flex;
    flex: 1;
    min-height: 0;
    padding-top: 21px;
}

.page {
    position: relative;
    width: 828px;
    margin: 0 auto;
    padding: 101px 113px 0 100px;
    overflow: hidden;
    background: #fff;
    border: 1px solid #ddd;
    border-bottom: none;
    border-radius: 3px 3px 0 0;
    font-family: Lato, sans-serif;
    font-size: 14px;
    font-weight: bold;
    font-variant-ligatures: none;
    line-height: 20px;
    color: #000;
}

.page p,
.page li {
    margin: 0 0 11px;
}

.page em {
    font-size: 15px;
}

.page ul {
    margin: 0;
    padding: 0;
    list-style: none;
}

.page li {
    display: flex;
    align-items: center;
}

.page li::before {
    content: "";
    width: 6px;
    height: 6px;
    margin: 0 19px 0 25px;
    border-radius: 50%;
    background: #000;
}

.caret {
    position: absolute;
    left: 100px;
    top: 101px;
    width: 1px;
    height: 19px;
    background: #000;
}

.spinner {
    width: 34px;
    height: 34px;
    margin: -8px 0 6px -17px;
    border: 1px solid #c7dbf2;
    border-top-color: #3f8edb;
    border-radius: 50%;
    display: flex;
    justify-content: center;
    align-items: flex-end;
    padding-bottom: 5px;
}

.spinner::after {
    content: "";
    width: 1px;
    height: 4px;
    background: #999;
}

.scrollbar {
    width: 18px;
    margin-top: -15px;
    padding-left: 6px;
}

.thumb {
    width: 6px;
    height: 122px;
    border-radius: 3px;
    background: #666;
}

.navpane {
    position: absolute;
    left: 8px;
    top: 12px;
    width: 42px;
    height: 41px;
    display: flex;
    align-items: center;
    justify-content: center;
    background: #fff;
    border-radius: 5px;
    box-shadow: 0 1px 4px rgba(0, 0, 0, 0.25);
}

.pen {
    position: absolute;
    left: 16px;
    bottom: 31px;
    width: 33px;
    height: 33px;
    display: flex;
    align-items: center;
    justify-content: center;
    border-radius: 50%;
    background: #222;
}

/* taskbar */
.taskbar {
    position: relative;
    display: flex;
    flex: none;
    height: 50px;
    padding-left: 78px;
    border-top: 1px solid #b9bec9;
    background: linear-gradient(90deg, #e1ebf6 0, #dfe9f7 18%, #d3ddf8 25%, #d8e0f2 45%, #d5dff4 68%, #e1ebf7 78%, #e1ebf7 100%);
}

.apps {
    display: flex;
}

.apps button {
    position: relative;
    display: flex;
    align-items: center;
    justify-content: center;
    width: 46px;
    height: 49px;
}

.open::after {
    content: "";
    position: absolute;
    bottom: 5px;
    width: 6px;
    height: 3px;
    border-radius: 2px;
    background: #7d8087;
}

.alert::after {
    width: 33px;
    background: #c42b1c;
}

.current::before {
    content: "";
    position: absolute;
    left: 3px;
    top: 4px;
    width: 40px;
    height: 41px;
    border-radius: 4px;
    background: rgba(255, 255, 255, 0.6);
}

.current svg {
    position: relative;
}

.current::after {
    width: 17px;
    background: #b8681f;
}

.badge {
    position: absolute;
    left: 24px;
    top: 7px;
    width: 17px;
    height: 17px;
    line-height: 17px;
    border-radius: 50%;
    color: #fff;
    font-size: 10px;
    text-align: center;
}

.grey {
    background: #7b8a93;
}

.red {
    background: #bf360c;
}

.blue {
    background: #0f80d7;
}

.purple {
    background: #4a2ba0;
}

.teal {
    background: #0f9199;
}

.tray {
    display: flex;
    align-items: center;
    margin-left: auto;
    padding-right: 21px;
    line-height: 17px;
    color: #222;
}

.mic {
    margin: 0 18px;
}

.lang {
    text-align: center;
    margin-right: 18px;
}

.status {
    display: flex;
    gap: 7px;
    margin-right: 16px;
}

.clock {
    text-align: right;
    margin-right: 9px;
}

.overlay {
    position: absolute;
    right: 0;
    bottom: 0;
    width: 191px;
    height: 12px;
    display: flex;
    align-items: flex-end;
    gap: 15px;
    padding-left: 67px;
    background: #0b0b0b;
    border-top-left-radius: 2px;
}

.mini {
    width: 13px;
    height: 4px;
    background: #bbb;
}

.dots {
    width: 15px;
    height: 5px;
    background: repeating-linear-gradient(90deg, #ddd 0, #ddd 4px, #0b0b0b 4px, #0b0b0b 5px);
}
```
